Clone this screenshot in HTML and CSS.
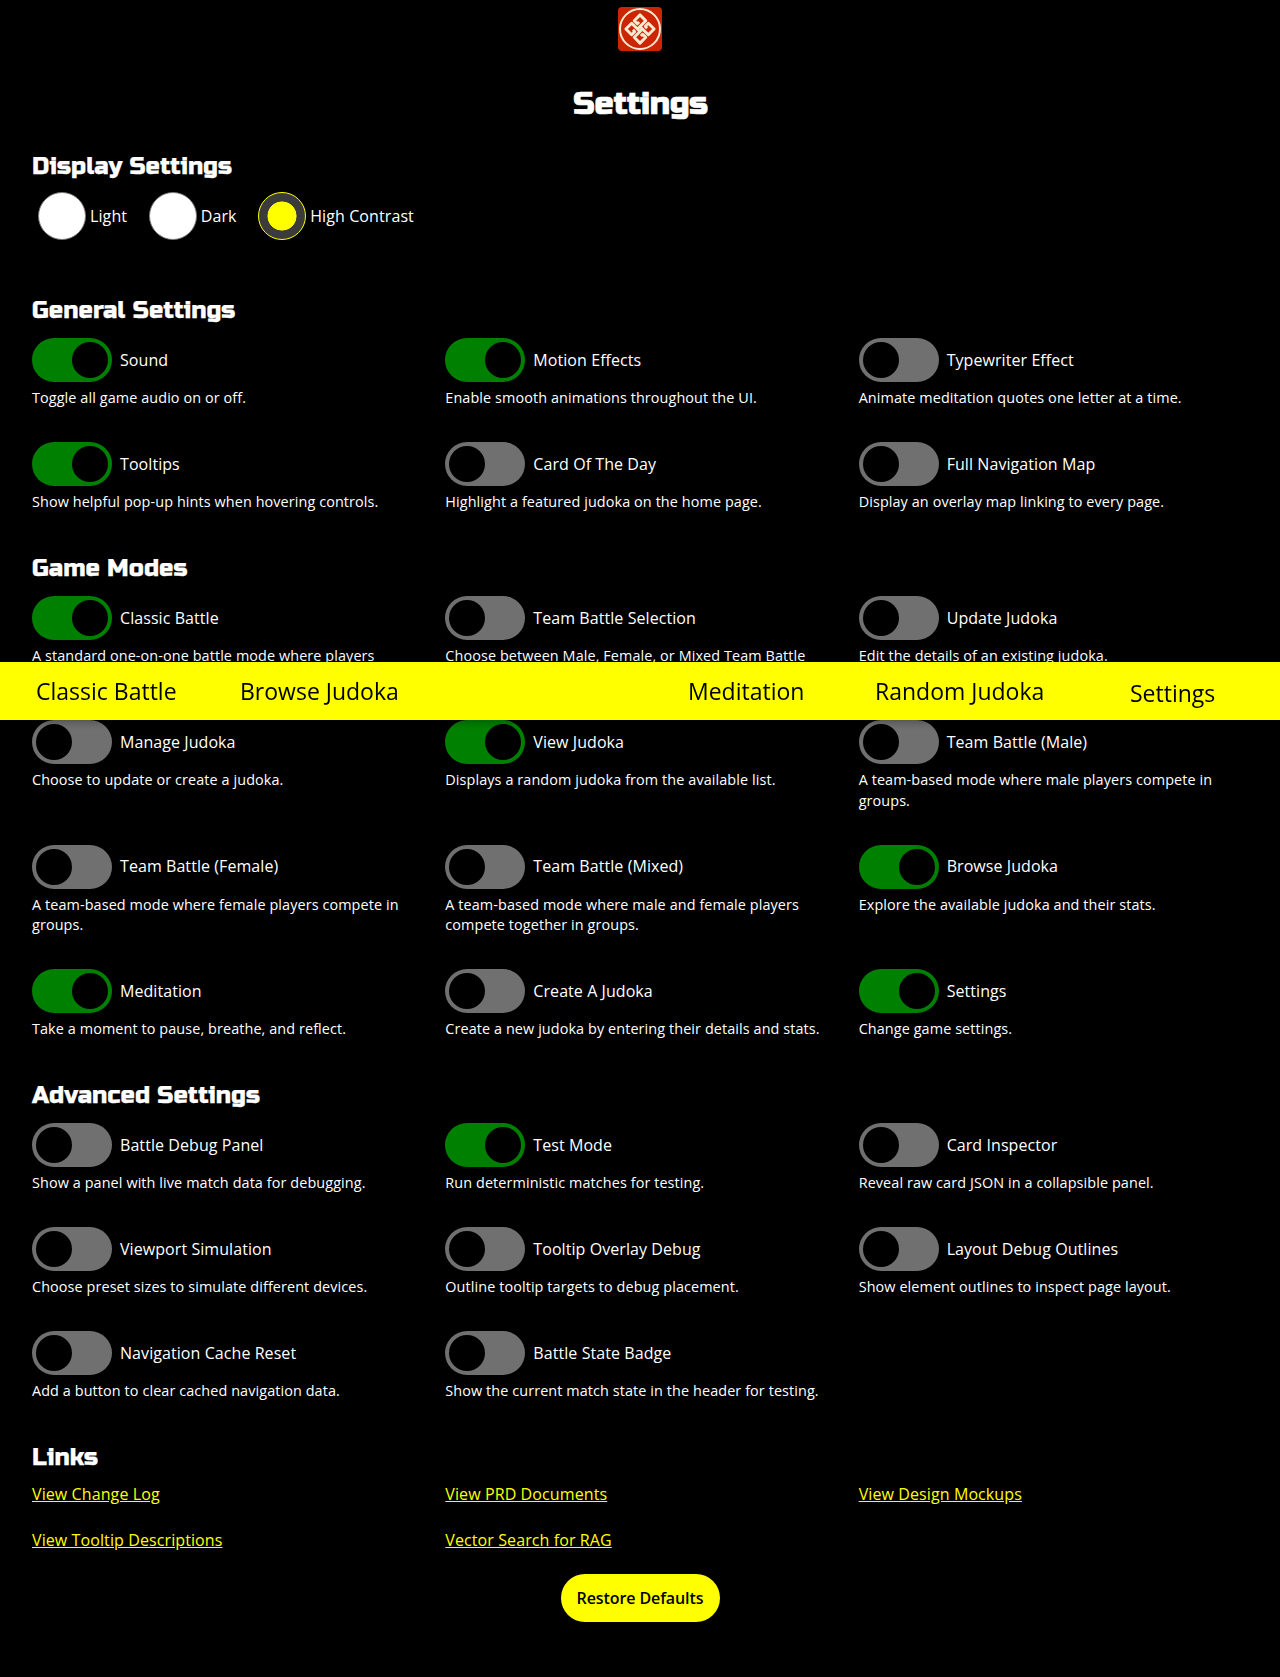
FILE: index.html
```html
<!DOCTYPE html>
<html lang="en">
<head>
<meta charset="utf-8">
<title>Settings</title>
<link rel="stylesheet" href="styles.css">
</head>
<body>
<header class="header">
  <svg class="logo" viewBox="0 0 44 44" aria-hidden="true">
    <rect width="44" height="44" rx="4" fill="#cb2504"/>
    <g fill="none" stroke="#f5ead0">
      <circle cx="22" cy="22" r="20" stroke-width="2"/>
      <g transform="translate(22 22) rotate(45)" stroke-width="2.9" stroke-linejoin="round">
        <path id="hook" d="M-5.6-4.4V-1.8H-10V-10H-1.8V1.8"/>
        <use href="#hook" transform="rotate(90)"/>
        <use href="#hook" transform="rotate(180)"/>
        <use href="#hook" transform="rotate(270)"/>
      </g>
    </g>
  </svg>
</header>
<main class="settings">
  <h1 class="title">Settings</h1>
  <section class="display">
    <h2 class="heading">Display Settings</h2>
    <div class="modes">
      <label class="mode"><span class="radio"></span><span class="mode-name">Light</span></label>
      <label class="mode"><span class="radio"></span><span class="mode-name">Dark</span></label>
      <label class="mode"><span class="radio radio-on"></span><span class="mode-name">High Contrast</span></label>
    </div>
  </section>
  <section class="group">
    <h2 class="heading">General Settings</h2>
    <div class="grid">
      <div class="item"><div class="row"><span class="switch on"></span>Sound</div><p class="desc">Toggle all game audio on or off.</p></div>
      <div class="item"><div class="row"><span class="switch on"></span>Motion Effects</div><p class="desc">Enable smooth animations throughout the UI.</p></div>
      <div class="item"><div class="row"><span class="switch"></span>Typewriter Effect</div><p class="desc">Animate meditation quotes one letter at a time.</p></div>
      <div class="item"><div class="row"><span class="switch on"></span>Tooltips</div><p class="desc">Show helpful pop-up hints when hovering controls.</p></div>
      <div class="item"><div class="row"><span class="switch"></span>Card Of The Day</div><p class="desc">Highlight a featured judoka on the home page.</p></div>
      <div class="item"><div class="row"><span class="switch"></span>Full Navigation Map</div><p class="desc">Display an overlay map linking to every page.</p></div>
    </div>
  </section>
  <section class="group">
    <h2 class="heading">Game Modes</h2>
    <div class="grid">
      <div class="item tall"><div class="row"><span class="switch on"></span>Classic Battle</div><p class="desc">A standard one-on-one battle mode where players</p></div>
      <div class="item"><div class="row"><span class="switch"></span>Team Battle Selection</div><p class="desc">Choose between Male, Female, or Mixed Team Battle</p></div>
      <div class="item"><div class="row"><span class="switch"></span>Update Judoka</div><p class="desc">Edit the details of an existing judoka.</p></div>
      <div class="item"><div class="row"><span class="switch"></span>Manage Judoka</div><p class="desc">Choose to update or create a judoka.</p></div>
      <div class="item"><div class="row"><span class="switch on"></span>View Judoka</div><p class="desc">Displays a random judoka from the available list.</p></div>
      <div class="item"><div class="row"><span class="switch"></span>Team Battle (Male)</div><p class="desc">A team-based mode where male players compete in groups.</p></div>
      <div class="item"><div class="row"><span class="switch"></span>Team Battle (Female)</div><p class="desc">A team-based mode where female players compete in groups.</p></div>
      <div class="item"><div class="row"><span class="switch"></span>Team Battle (Mixed)</div><p class="desc">A team-based mode where male and female players compete together in groups.</p></div>
      <div class="item"><div class="row"><span class="switch on"></span>Browse Judoka</div><p class="desc">Explore the available judoka and their stats.</p></div>
      <div class="item"><div class="row"><span class="switch on"></span>Meditation</div><p class="desc">Take a moment to pause, breathe, and reflect.</p></div>
      <div class="item"><div class="row"><span class="switch"></span>Create A Judoka</div><p class="desc">Create a new judoka by entering their details and stats.</p></div>
      <div class="item"><div class="row"><span class="switch on"></span>Settings</div><p class="desc">Change game settings.</p></div>
    </div>
  </section>
  <section class="group">
    <h2 class="heading">Advanced Settings</h2>
    <div class="grid">
      <div class="item"><div class="row"><span class="switch"></span>Battle Debug Panel</div><p class="desc">Show a panel with live match data for debugging.</p></div>
      <div class="item"><div class="row"><span class="switch on"></span>Test Mode</div><p class="desc">Run deterministic matches for testing.</p></div>
      <div class="item"><div class="row"><span class="switch"></span>Card Inspector</div><p class="desc">Reveal raw card JSON in a collapsible panel.</p></div>
      <div class="item"><div class="row"><span class="switch"></span>Viewport Simulation</div><p class="desc">Choose preset sizes to simulate different devices.</p></div>
      <div class="item"><div class="row"><span class="switch"></span>Tooltip Overlay Debug</div><p class="desc">Outline tooltip targets to debug placement.</p></div>
      <div class="item"><div class="row"><span class="switch"></span>Layout Debug Outlines</div><p class="desc">Show element outlines to inspect page layout.</p></div>
      <div class="item"><div class="row"><span class="switch"></span>Navigation Cache Reset</div><p class="desc">Add a button to clear cached navigation data.</p></div>
      <div class="item"><div class="row"><span class="switch"></span>Battle State Badge</div><p class="desc">Show the current match state in the header for testing.</p></div>
    </div>
  </section>
  <section class="link-group">
    <h2 class="heading">Links</h2>
    <div class="grid links">
      <a href="#">View Change Log</a>
      <a href="#">View PRD Documents</a>
      <a href="#">View Design Mockups</a>
      <a href="#">View Tooltip Descriptions</a>
      <a href="#">Vector Search for RAG</a>
    </div>
  </section>
  <button class="restore">Restore Defaults</button>
</main>
<nav class="navbar">
  <a class="nav-classic" href="#">Classic Battle</a>
  <a class="nav-browse" href="#">Browse Judoka</a>
  <a class="nav-meditation" href="#">Meditation</a>
  <a class="nav-random" href="#">Random Judoka</a>
  <a class="nav-settings" href="#">Settings</a>
</nav>
</body>
</html>
```
FILE: styles.css
```css
* { box-sizing: border-box; }
body {
  margin: 0;
  min-height: 1677px;
  background: #000;
  color: #fff;
  font: 16px/1.4 "Open Sans", "Noto Sans", sans-serif;
}
.header { display: flex; justify-content: center; padding-top: 7px; height: 56px; }
.logo { width: 44px; height: 44px; }
.settings { display: flex; flex-direction: column; padding: 0 32px; }
.title, .heading { margin: 0; font-family: "Russo One", Roboto, sans-serif; font-weight: 400; white-space: nowrap; }
.title { font-size: 32px; line-height: 45px; padding: 25px 0 0 1px; text-align: center; letter-spacing: -.25px; -webkit-text-stroke: .7px #fff; }
.heading { font-size: 24px; line-height: 33.6px; margin-bottom: 10.6px; letter-spacing: .04px; -webkit-text-stroke: .25px #fff; }
.display { margin-top: 24px; margin-bottom: 54.4px; }
.display .heading { margin-bottom: 7px; }
.modes { display: flex; height: 49px; padding: 1px 0 0 6px; gap: 21.6px; }
.mode { display: flex; align-items: center; gap: 4px; height: 48px; }
.mode-name { padding-top: 2px; letter-spacing: .1px; }
.radio { width: 48px; height: 48px; border: 1px solid #767676; border-radius: 50%; background: #fff; }
.radio-on { border-color: #ff0; background: radial-gradient(circle, #ff0 14.2px, #3b3b3b 14.8px); }
.grid { display: grid; grid-template-columns: repeat(3, 1fr); gap: 24px; }
.group { padding-bottom: 29.4px; }
.link-group { padding-bottom: 22px; }
.link-group .heading { margin-bottom: 8.6px; }
.row { display: flex; align-items: center; gap: 8px; height: 44px; letter-spacing: .07px; }
.switch { width: 80px; height: 44px; padding: 4px; border-radius: 22px; background: #707070; display: flex; }
.switch::before { content: ""; width: 36px; height: 36px; border-radius: 50%; background: #000; }
.switch.on { background: green; justify-content: flex-end; }
.desc { margin: 6px 0 10px; font-size: 14.4px; line-height: 20.16px; letter-spacing: .1px; }
.tall { padding-bottom: 20.16px; }
.links a { color: #ff0; justify-self: start; letter-spacing: .1px; }
.restore { align-self: center; width: 159px; height: 48px; border: 0; border-radius: 24px; padding: 0; background: #ff0; color: #000; font: 600 16px "Open Sans", sans-serif; letter-spacing: -.1px; }
.navbar { position: fixed; left: 0; right: 0; top: 662px; height: 58px; background: #ff0; box-shadow: 0 2px 8px rgba(0, 0, 0, .3); display: flex; align-items: center; padding-left: 36px; font-size: 23px; line-height: 32px; white-space: nowrap; }
.navbar a { color: #000; text-decoration: none; }
.nav-classic { width: 204px; }
.nav-browse { width: 448px; }
.nav-meditation { width: 187px; }
.nav-random { width: 255px; }
.nav-settings { padding-top: 4px; }
```
